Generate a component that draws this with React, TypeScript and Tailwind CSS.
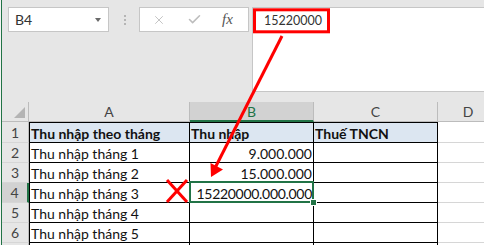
import { Check, X } from "lucide-react";

const rows = [
  { n: 1, a: "Thu nhập theo tháng", b: "Thu nhập", c: "Thuế TNCN", head: true },
  { n: 2, a: "Thu nhập tháng 1", b: "9.000.000", c: "" },
  { n: 3, a: "Thu nhập tháng 2", b: "15.000.000", c: "" },
  { n: 4, a: "Thu nhập tháng 3", b: "15220000.000.000", c: "" },
  { n: 5, a: "Thu nhập tháng 4", b: "", c: "" },
  { n: 6, a: "Thu nhập tháng 5", b: "", c: "" },
  { n: 7, a: "", b: "", c: "" },
];

function Toolbar() {
  return (
    <div className="h-[102px] shrink-0 flex items-start pt-[7px] pl-[6px]">
      <div className="w-[101px] shrink-0 h-[25px] bg-white border border-[#c6c6c6] flex items-center justify-between pl-[6px] pr-[7px] text-[14px] text-[#333]">
        <span>B4</span>
        <span className="w-0 h-0 border-l-[3px] border-r-[3px] border-t-[4px] border-l-transparent border-r-transparent border-t-[#6a6a6a]" />
      </div>
      <div className="ml-[15px] h-[25px] flex flex-col items-center justify-center gap-[2px]">
        <span className="size-[2px] bg-[#b5b5b5]" />
        <span className="size-[2px] bg-[#b5b5b5]" />
        <span className="size-[2px] bg-[#b5b5b5]" />
      </div>
      <div className="ml-[13px] w-[110px] shrink-0 h-[25px] bg-white border border-[#c6c6c6] flex items-center">
        <X className="ml-[12px] size-[14px] text-[#bdbdbd]" strokeWidth={1.5} />
        <Check className="ml-[21px] size-[15px] text-[#bdbdbd]" strokeWidth={2.5} />
        <span className="ml-[20px] text-[15px] italic text-[#555]" style={{ fontFamily: '"Liberation Serif", serif' }}>
          fx
        </span>
      </div>
      <div className="ml-[3px] flex-1 h-[85px] bg-white border-l border-t border-b border-[#c6c6c6] pl-[11px] pt-[3px] text-[12.5px] leading-[19px] text-[#333]">
        15220000
      </div>
    </div>
  );
}

function HeaderRow() {
  return (
    <div className="flex h-[20px] text-[14px] text-[#444]">
      <div className="w-[27px] shrink-0 border-r border-b border-[#bcbcbc] relative">
        <svg className="absolute left-[12px] top-[5px]" width="12" height="12" viewBox="0 0 12 12">
          <polygon points="11,0 11,11 0,11" fill="#b4b4b4" />
        </svg>
      </div>
      <div className="w-[161px] shrink-0 border-r border-b border-[#bcbcbc] flex items-center justify-center">A</div>
      <div className="w-[124px] shrink-0 border-r border-[#bcbcbc] border-b-2 border-b-[#217346] bg-[#d2d2d2] flex items-center justify-center text-[#217346]">
        B
      </div>
      <div className="w-[124px] shrink-0 border-r border-b border-[#bcbcbc] flex items-center justify-center">C</div>
      <div className="w-[60px] shrink-0 border-b border-[#bcbcbc] flex items-center justify-center">D</div>
    </div>
  );
}

export default function App() {
  return (
    <div className="relative w-[484px] h-[245px] overflow-hidden bg-[#e6e6e6] flex" style={{ fontFamily: "Lato, sans-serif" }}>
      <div className="w-px shrink-0 bg-[#f4f4f4]" />
      <div className="flex-1 flex flex-col border-l border-[#217346] min-w-0">
        <Toolbar />
        <HeaderRow />
        {rows.map((r) => {
          const sel = r.n === 4;
          const h = r.head ? "border-t" : "";
          const fill = r.head ? "bg-[#dce6f1] font-bold" : "bg-white";
          return (
            <div key={r.n} className={`flex shrink-0 text-[14px] leading-[19px] text-[#111] ${r.head ? "h-[21px]" : "h-[20px]"}`}>
              <div
                className={`w-[27px] shrink-0 border-b border-b-[#d6d6d6] flex items-center justify-center text-[#444] ${
                  sel ? "bg-[#d2d2d2] border-r-2 border-r-[#217346]" : "border-r border-r-[#bcbcbc]"
                }`}
              >
                {r.n < 7 ? r.n : ""}
              </div>
              <div className={`w-[161px] shrink-0 border-l border-r border-b border-black pl-[1px] pt-px ${h} ${fill}`}>{r.a}</div>
              <div
                className={`w-[124px] shrink-0 border-r border-b border-black pr-[1px] pt-px whitespace-nowrap ${h} ${fill} ${
                  r.head ? "pl-[1px]" : "text-right"
                } ${sel ? "tracking-[-0.3px]" : ""}`}
              >
                {r.b}
              </div>
              <div className={`w-[124px] shrink-0 border-r border-b border-black pl-[1px] pt-px ${h} ${fill}`}>{r.c}</div>
              <div className="w-[60px] shrink-0 bg-white border-b border-[#d6d6d6]" />
            </div>
          );
        })}
      </div>

      {/* selected cell B4 */}
      <div className="absolute left-[189px] top-[181px] w-[125px] h-[22px] border-2 border-[#217346]" />
      <div className="absolute left-[311px] top-[200px] size-[5px] bg-[#217346] outline outline-1 outline-white" />

      {/* red annotations */}
      <svg className="absolute inset-0 pointer-events-none" width="484" height="245" viewBox="0 0 484 245">
        <rect x="254.5" y="9.8" width="74" height="22" fill="none" stroke="#ff0000" strokeWidth="3" />
        <line x1="282" y1="36" x2="214" y2="170" stroke="#ff0000" strokeWidth="3" />
        <polygon points="211,177 210.5,163 223,169.5" fill="#ff0000" />
        <line x1="167" y1="180" x2="187" y2="202" stroke="#ff0000" strokeWidth="3" />
        <line x1="187" y1="180" x2="167" y2="202" stroke="#ff0000" strokeWidth="3" />
      </svg>
    </div>
  );
}
